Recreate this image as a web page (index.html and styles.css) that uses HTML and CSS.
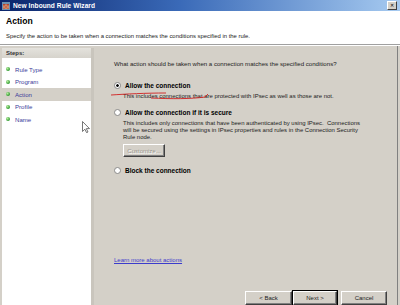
FILE: index.html
```html
<!DOCTYPE html>
<html lang="en">
<head>
  <meta charset="UTF-8">
  <title>New Inbound Rule Wizard</title>
  <link rel="stylesheet" href="styles.css">
</head>
<body>
  <div class="window">
    <div class="titlebar">
      <svg class="app-icon" width="8" height="8" viewBox="0 0 8 8">
        <rect x="0" y="0" width="8" height="8" fill="#6b8fb0"/>
        <rect x="1" y="2" width="6" height="5" fill="#b5432e"/>
        <path d="M1 4h6M1 6h6M4 2v2M2 4v2M6 4v2M4 6v1" stroke="#e9c7a0" stroke-width="0.6"/>
      </svg>
      <span class="title-text">New Inbound Rule Wizard</span>
      <span class="close-btn">&#x2715;</span>
    </div>

    <div class="header">
      <div class="header-title">Action</div>
      <div class="header-sub">Specify the action to be taken when a connection matches the conditions specified in the rule.</div>
    </div>

    <div class="body">
      <aside class="steps">
        <div class="steps-head">Steps:</div>
        <ul class="step-list">
          <li class="step"><span class="dot"></span>Rule Type</li>
          <li class="step"><span class="dot"></span>Program</li>
          <li class="step current"><span class="dot"></span>Action</li>
          <li class="step"><span class="dot"></span>Profile</li>
          <li class="step"><span class="dot"></span>Name</li>
        </ul>
        <!-- mouse pointer left in the capture -->
        <svg class="cursor" width="8" height="12" viewBox="0 0 8 12">
          <path d="M0.5 0.5v10l2.4-2.3 1.7 3.5 1.4-.7-1.7-3.4h3.2z" fill="#fff" stroke="#555" stroke-width="0.8"/>
        </svg>
      </aside>

      <section class="content">
        <p class="question">What action should be taken when a connection matches the specified conditions?</p>

        <div class="option first">
          <label class="radio-row"><span class="radio checked"></span>Allow the connection</label>
          <p class="desc">This includes connections that are protected with IPsec as well as those are not.</p>
        </div>

        <div class="option second">
          <label class="radio-row"><span class="radio"></span>Allow the connection if it is secure</label>
          <p class="desc">This includes only connections that have been authenticated by using IPsec.&nbsp; Connections will be secured using the settings in IPsec properties and rules in the Connection Security Rule node.</p>
          <button class="btn customize" disabled>Customize...</button>
        </div>

        <div class="option third">
          <label class="radio-row"><span class="radio"></span>Block the connection</label>
        </div>

        <a class="learn" href="#">Learn more about actions</a>

        <div class="footer">
          <button class="btn back">&lt; Back</button>
          <button class="btn next">Next &gt;</button>
          <button class="btn cancel">Cancel</button>
        </div>

        <!-- red pen marks drawn over the screenshot -->
        <svg class="scribble" width="110" height="12" viewBox="0 0 110 12">
          <path d="M0 6 C 15 5, 35 4, 55 4 M40 9 C 60 10, 80 10, 94 8 L 97 5" fill="none" stroke="#d02020" stroke-width="0.9"/>
        </svg>
      </section>
    </div>
  </div>
</body>
</html>
```

FILE: styles.css
```css
/* Global Styles */
body {
  margin: 0;
  padding: 0;
  font-family: 'Liberation Sans', Arial, sans-serif;
  color: #000;
  background: #d4d0c8;
}

.window {
  width: 400px;
  height: 305px;
  overflow: hidden;
  background: #d4d0c8;
  display: flex;
  flex-direction: column;
}

/* Title bar */
.titlebar {
  height: 11px;
  flex: none;
  display: flex;
  align-items: center;
  padding: 0 3px 0 2px;
  background: linear-gradient(to right, #0a246a 0%, #3a6ab8 45%, #a6caf0 100%);
}

.app-icon {
  margin-right: 3px;
}

.title-text {
  color: #fff;
  font-size: 6.6px;
  font-weight: bold;
  letter-spacing: 0.05px;
}

.close-btn {
  margin-left: auto;
  width: 8px;
  height: 7px;
  font-size: 5px;
  line-height: 7px;
  text-align: center;
  color: #000;
  background: #d4d0c8;
  border: 1px solid;
  border-color: #fff #404040 #404040 #fff;
}

/* Header */
.header {
  height: 33px;
  flex: none;
  background: #fff;
  padding: 0 6px;
  border-bottom: 1px solid #a0a0a0;
}

.header-title {
  margin-top: 6px;
  font-size: 8.6px;
  font-weight: bold;
  line-height: 9px;
}

.header-sub {
  margin-top: 7px;
  font-size: 5.9px;
  line-height: 7px;
  color: #222;
}

/* Body */
.body {
  flex: 1;
  display: flex;
  border-top: 1px solid #fff;
}

/* Steps panel */
.steps {
  position: relative;
  width: 89px;
  margin-left: 2px;
  margin-top: 2px;
  background: #fff;
  border-right: 3px solid #c9c5bd;
}

.steps-head {
  height: 10px;
  line-height: 10px;
  padding-left: 4px;
  font-size: 6px;
  font-weight: bold;
  color: #333;
  background: linear-gradient(#e4e2dd, #d6d3cc);
}

.step-list {
  list-style: none;
  margin: 5px 0 0;
  padding: 0;
}

.step {
  display: flex;
  align-items: center;
  height: 12.5px;
  padding-left: 4px;
  font-size: 6.1px;
  color: #3c3c9a;
}

.step.current {
  background: #d4d0c8;
}

.dot {
  width: 4px;
  height: 4px;
  border-radius: 50%;
  background: radial-gradient(circle at 35% 35%, #b8f0a0, #2f9a2f 70%);
  margin-right: 5px;
}

.cursor {
  position: absolute;
  left: 80px;
  top: 73px;
}

/* Main content */
.content {
  position: relative;
  flex: 1;
  padding: 14px 0 0 20px;
  border-right: 1px solid #808080;
  margin-right: 2px;
}

.question {
  margin: 0;
  font-size: 6.1px;
  line-height: 8px;
  color: #222;
}

.radio-row {
  display: flex;
  align-items: center;
  height: 9px;
  font-size: 6.5px;
  font-weight: bold;
}

.radio {
  width: 5px;
  height: 5px;
  margin-right: 4px;
  border-radius: 50%;
  background: #fff;
  border: 1px solid #8a8a8a;
  box-shadow: inset 0 0 0 1px #fff;
}

.radio.checked {
  background: radial-gradient(circle, #000 0 1.3px, #fff 1.6px);
}

.desc {
  margin: 3px 0 0 9px;
  width: 241px;
  font-size: 5.95px;
  line-height: 7px;
  color: #222;
}

.option.first {
  margin-top: 13px;
}

.option.second {
  margin-top: 8px;
}

.option.third {
  margin-top: 9px;
}

.btn {
  font-family: 'Liberation Sans', Arial, sans-serif;
  font-size: 6px;
  padding: 0;
  height: 14px;
  background: #d4d0c8;
  color: #222;
  border: 1px solid;
  border-color: #fff #404040 #404040 #fff;
  box-shadow: inset -1px -1px 0 #808080;
}

.btn.customize {
  display: block;
  width: 42px;
  height: 13px;
  margin: 3px 0 0 9px;
  color: #9a978f;
  text-shadow: 1px 1px 0 #fff;
}

.learn {
  display: block;
  width: max-content;
  margin-top: 81px;
  font-size: 6px;
  line-height: 8px;
  color: #3c3ccc;
}

.footer {
  display: flex;
  margin: 27px 0 0 131px;
}

.btn.back {
  width: 47px;
}

.btn.next {
  width: 44px;
  margin-left: 1px;
  outline: 1px solid #000;
}

.btn.cancel {
  width: 46px;
  margin-left: 4px;
}

.scribble {
  position: absolute;
  left: 17px;
  top: 43px;
}
```
